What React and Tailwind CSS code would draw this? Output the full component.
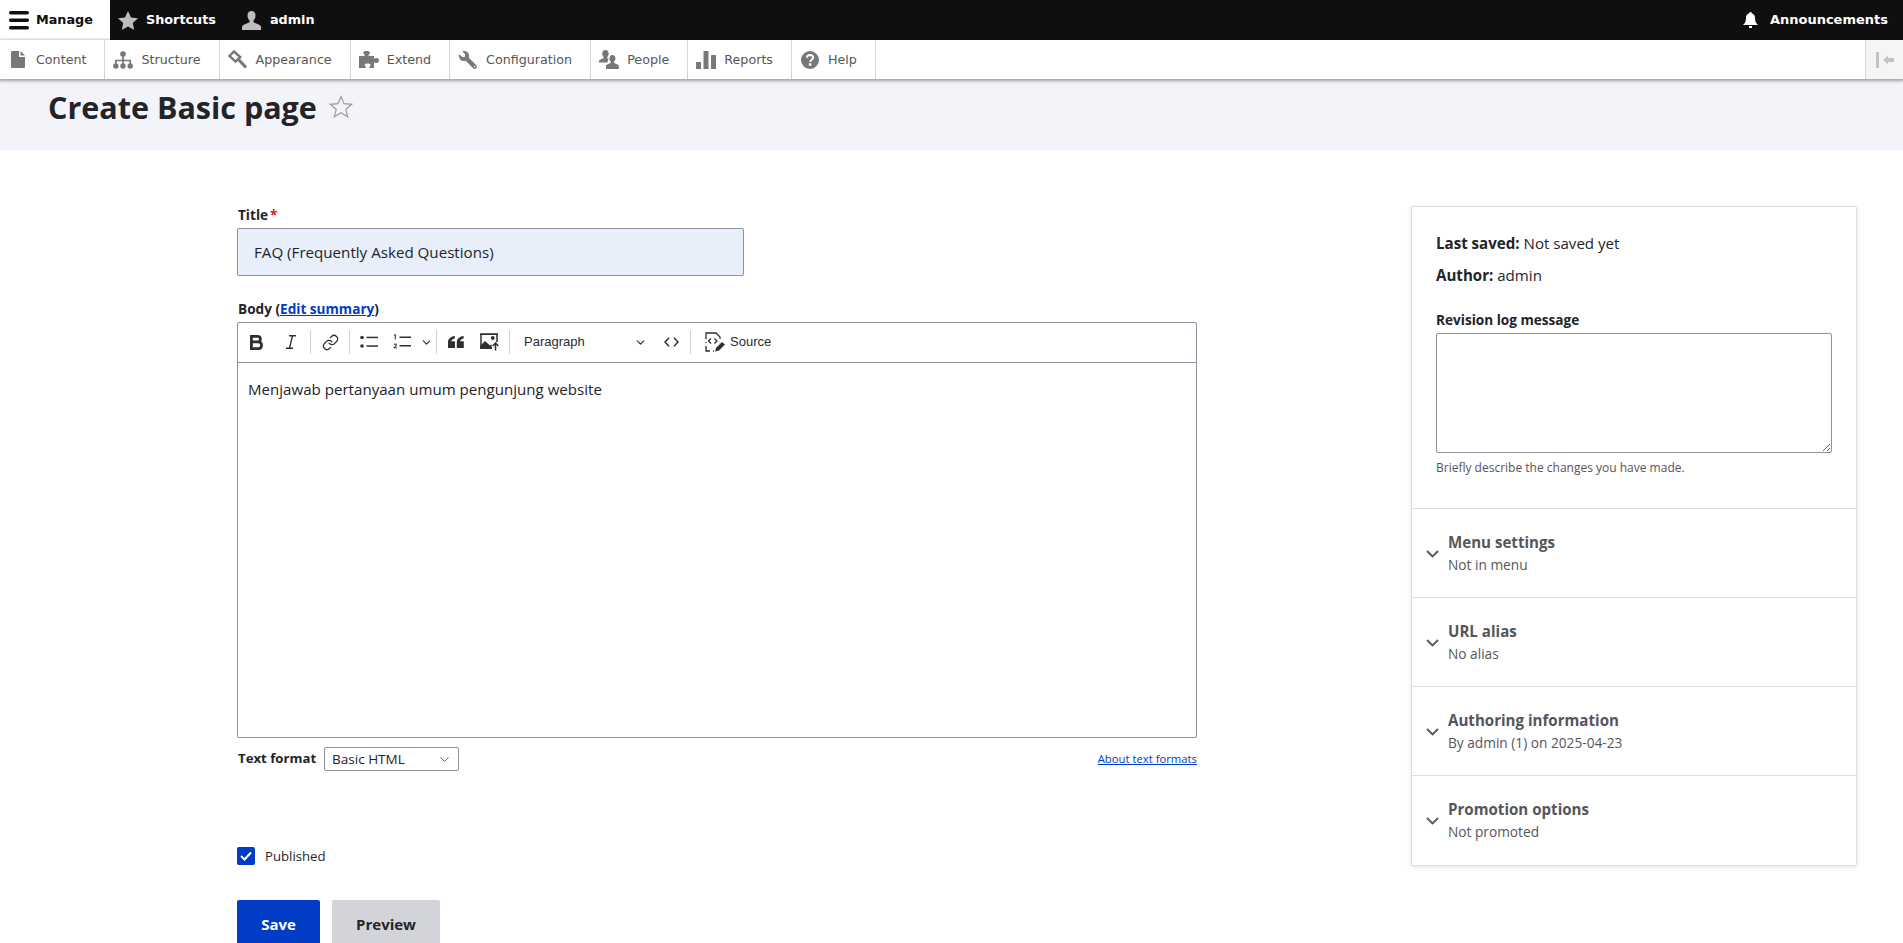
import React from "react";
import { FaWrench } from "react-icons/fa";
import { Link, ChevronDown } from "lucide-react";

const G = "#787878";

const Doc = () => (
  <svg width="14" height="17" viewBox="0 0 14 17" fill={G}>
    <path d="M1 0h7v6h6v10a1 1 0 0 1-1 1H1a1 1 0 0 1-1-1V1a1 1 0 0 1 1-1z" />
    <path d="M9.5 0 14 4.6H9.5z" />
  </svg>
);
const Org = () => (
  <svg width="20" height="18" viewBox="0 0 20 18" fill={G}>
    <circle cx="10" cy="3" r="2.8" />
    <circle cx="2.8" cy="15" r="2.7" />
    <circle cx="10" cy="15" r="2.7" />
    <circle cx="17.2" cy="15" r="2.7" />
    <path d="M10 3v12M2.8 15V9.5h14.4V15" fill="none" stroke={G} strokeWidth="1.7" />
  </svg>
);
const Hammer = () => (
  <svg width="20" height="20" viewBox="0 0 20 20">
    <path d="M6 1.5 12.2 7 7.6 11.6 1.4 6z" fill="#fff" stroke={G} strokeWidth="2.4" />
    <path d="M10.5 9.5 18 17.5" fill="none" stroke={G} strokeWidth="3.2" />
  </svg>
);
const Puzzle = () => (
  <svg width="20" height="18" viewBox="0 0 20 18" fill={G}>
    <path d="M0 5h5.5V3.6C4.6 3 4.2 2.4 4.2 1.8 4.2.6 5.6 0 7.6 0S11 .6 11 1.8c0 .6-.4 1.2-1.300 1.800V5H15v3c.7-.7 1.300-1 2-1 1.600 0 3 .7 3 2.400S18.600 12 17 12c-.7 0-1.300-.3-2-1v6h-4.500v-1.400c.8-.5 1.100-1 1.100-1.500 0-.9-1.300-1.500-3-1.500s-3 .6-3 1.500c0 .5.3 1 1.100 1.500V17H0z" />
  </svg>
);
const People = () => (
  <svg width="20" height="20" viewBox="0 0 20 20" fill={G}>
    <path d="M6.500 0c2 0 3.200 1.500 3.200 3.600 0 1.500-.6 2.800-1.400 3.500v1.200l1.500.7c-1 .7-1.300 2-1 3.500H0v-1.400c0-1 1-1.400 2.600-2.100L4.600 8.300V7.100C3.800 6.400 3.200 5.100 3.200 3.600 3.200 1.500 4.500 0 6.500 0z" />
    <path d="M13.500 5c1.800 0 2.900 1.400 2.900 3.300 0 1.400-.5 2.600-1.300 3.200v1.400l2.500 1.200c1.200.6 2.200 1 2.200 2V19H7v-2.900c0-1 1-1.400 2.200-2l2.500-1.200v-1.400c-.8-.6-1.300-1.800-1.300-3.200C10.400 6.400 11.700 5 13.500 5z" />
  </svg>
);
const Bars = () => (
  <svg width="20" height="18" viewBox="0 0 20 18" fill={G}>
    <rect x="0" y="11" width="5" height="7" rx=".5" />
    <rect x="7.500" y="0" width="5" height="18" rx=".5" />
    <rect x="15" y="4" width="5" height="14" rx=".5" />
  </svg>
);
const Help = () => (
  <svg width="18" height="18" viewBox="0 0 18 18">
    <circle cx="9" cy="9" r="9" fill={G} />
    <path d="M5.900 6.800C6 5 7.300 4 9 4c1.800 0 3.100 1 3.100 2.600 0 2.200-3 2.200-3 4.400" fill="none" stroke="#fff" strokeWidth="2" />
    <rect x="7.900" y="12.300" width="2.400" height="2.400" fill="#fff" />
  </svg>
);

const tray = [
  ["Content", <Doc />],
  ["Structure", <Org />],
  ["Appearance", <Hammer />],
  ["Extend", <Puzzle />],
  ["Configuration", <FaWrench size={18} color={G} className="-scale-x-100" />],
  ["People", <People />],
  ["Reports", <Bars />],
  ["Help", <Help />],
];

const Sep = () => <div className="w-px h-[24px] bg-[#ced0d6] mx-[2px]" />;

const Btn = ({ children, w = "w-[34px]" }) => (
  <div className={`${w} h-[34px] flex items-center justify-center shrink-0`}>{children}</div>
);

const BoldIcon = () => (
  <svg width="14" height="15" viewBox="0 0 14 15" fill="none" stroke="#2f2f33" strokeWidth="2.800">
    <path d="M1.400 1.400h6c4 0 4 5.500 0 5.500h-6zM1.400 6.900h7c4.200 0 4.200 6.700 0 6.700h-7z" />
  </svg>
);
const ItalicIcon = () => (
  <svg width="12" height="14" viewBox="0 0 12 14" fill="none" stroke="#2f2f33" strokeWidth="1.400">
    <path d="M4 .7h7M1 13.300h7M7.600 .7 4.400 13.300" />
  </svg>
);
const Ul = () => (
  <svg width="18" height="14" viewBox="0 0 18 14" fill="#2f2f33">
    <circle cx="2" cy="2.500" r="1.800" />
    <circle cx="2" cy="11" r="1.800" />
    <rect x="6.500" y="1.700" width="11.500" height="1.500" />
    <rect x="6.500" y="10.300" width="11.500" height="1.500" />
  </svg>
);
const Ol = () => (
  <svg width="18" height="16" viewBox="0 0 18 16" fill="#2f2f33">
    <path d="M1 .8 2.800 0v5.600H1.800V1.500L1 1.800z" />
    <path d="M.8 10.600c.2-.7.8-1 1.500-1 .9 0 1.500.5 1.500 1.300 0 1-1 1.600-1.800 2.400h1.900v.9H.6v-.8c1.100-1 2.100-1.800 2.100-2.400 0-.3-.2-.5-.5-.5-.3 0-.5.2-.6.6z" />
    <rect x="6.500" y="2.500" width="11.500" height="1.500" />
    <rect x="6.500" y="11" width="11.500" height="1.500" />
  </svg>
);
const Quote = () => (
  <svg width="16" height="12" viewBox="0 0 16 12" fill="#2f2f33">
    <path d="M0 12V6.500C0 3 2.200.7 6.800 0v2.400C4.600 3 3.400 4 3.200 5.300h3.800V12z" />
    <path d="M8.800 12V6.500c0-3.500 2.200-5.800 6.800-6.500v2.400c-2.200.6-3.400 1.600-3.600 2.900h3.800V12z" />
  </svg>
);
const ImgUp = () => (
  <svg width="20" height="18" viewBox="0 0 20 18">
    <path d="M1 15.500V1.200h16v8" fill="none" stroke="#2f2f33" strokeWidth="1.500" />
    <path d="M0 16V13l5-5 5 4.500 1.500-1.500V16z" fill="#2f2f33" />
    <path d="M0 .4h18v1.600H0zM0 14h12v2H0z" fill="#2f2f33" />
    <circle cx="12.800" cy="5" r="1.900" fill="#2f2f33" />
    <path d="M15.500 17.500v-7M12.700 13l2.800-3 2.800 3" fill="none" stroke="#2f2f33" strokeWidth="1.500" />
  </svg>
);
const Code = () => (
  <svg width="15" height="10" viewBox="0 0 15 10" fill="none" stroke="#2f2f33" strokeWidth="1.500">
    <path d="M5 .8 1 5l4 4.200M10 .8 14 5l-4 4.200" />
  </svg>
);
const SourceIcon = () => (
  <svg width="20" height="20" viewBox="0 0 20 20" fill="none" stroke="#2f2f33" strokeWidth="1.300">
    <path d="M1 7V1h10l4 4v2M1 11v-1M1 14v5h4M8 19h1" />
    <path d="M6 6.500 3.500 9 6 11.500M9.500 6.500 12 9l-2.500 2.500" />
    <path d="M10 19.500 11 16l6-6 3 2.500-6 6z" fill="#2f2f33" stroke="none" />
  </svg>
);

const Summary = ({ title, sub }) => (
  <div className="h-[89px] border-b border-[#dedfe4] last:border-b-0 flex items-center">
    <div className="w-[36px] flex justify-center pl-[4px] pt-[1px] shrink-0">
      <svg width="13" height="8" viewBox="0 0 13 8" fill="none" stroke="#55565b" strokeWidth="1.800">
        <path d="M1 1l5.500 5.500L12 1" />
      </svg>
    </div>
    <div className="pb-[2px]">
      <div className="text-[15.100px] leading-[22px] font-bold text-[#55565b]">{title}</div>
      <div className="text-[13.700px] leading-[18px] mt-[3px] text-[#55565b]">{sub}</div>
    </div>
  </div>
);

export default function App() {
  return (
    <div className="h-[943px] overflow-hidden bg-white text-[#232429] font-['Open_Sans','Noto_Sans',sans-serif]">
      <div className="h-[40px] bg-[#0f0f0f] flex items-center text-[12.800px] font-bold font-['DejaVu_Sans',sans-serif] text-white">
        <div className="h-full bg-white text-[#0f0f0f] flex items-center pr-[17px]">
          <div className="w-[36px] pl-[9px]">
            <svg width="20" height="19" viewBox="0 0 20 19" fill="#0f0f0f">
              <rect y="0" width="20" height="3.500" rx="1.700" />
              <rect y="7.500" width="20" height="3.500" rx="1.700" />
              <rect y="15" width="20" height="3.500" rx="1.700" />
            </svg>
          </div>
          <span>Manage</span>
        </div>
        <div className="flex items-center pr-[18px]">
          <div className="w-[36px] flex justify-center">
            <svg width="20" height="19" viewBox="0 0 20 19" fill="#bebebe">
              <path d="M10 0l3 6.500 7 .8-5.200 4.800 1.400 6.900L10 15.500 3.800 19l1.400-6.900L0 7.300l7-.8z" />
            </svg>
          </div>
          <span>Shortcuts</span>
        </div>
        <div className="flex items-center pr-[18px]">
          <div className="w-[36px] flex justify-center">
            <svg width="19" height="19" viewBox="0 0 19 19" fill="#bebebe">
              <path d="M9.500 0c2.600 0 4 1.800 4 4.500 0 2.200-.9 3.900-2 4.800v2l4 1.800c1.700.8 3.500 1.300 3.500 3V19H0v-2.900c0-1.700 1.800-2.200 3.500-3l4-1.800v-2c-1.100-.9-2-2.600-2-4.800C5.500 1.800 6.900 0 9.500 0z" />
            </svg>
          </div>
          <span>admin</span>
        </div>
        <div className="ml-auto flex items-center pr-[15px] gap-[12px] text-[13px]">
          <svg width="15" height="16" viewBox="0 0 15 16" fill="#fff">
            <path d="M7.500 0c.8 0 1.200.5 1.200 1.200C11 1.800 12 3.600 12 6c0 3 .8 5 3 7H0c2.200-2 3-4 3-7 0-2.400 1-4.200 3.300-4.800C6.300.5 6.700 0 7.500 0z" />
            <rect x="6" y="14" width="3" height="2" />
          </svg>
          <span>Announcements</span>
        </div>
      </div>

      <div className="relative z-10 h-[39px] bg-white flex items-stretch text-[12.700px] font-['DejaVu_Sans',sans-serif] text-[#565656] shadow-[0_1px_3px_1px_rgba(0,0,0,0.35)]">
        {tray.map(([label, icon]) => (
          <div key={label} className="flex items-center pr-[18px] border-r border-[#d5d5d5]">
            <div className="w-[36px] flex justify-center shrink-0">{icon}</div>
            <span>{label}</span>
          </div>
        ))}
        <div className="ml-auto w-[38px] bg-[#f5f5f5] border-l border-[#d5d5d5] flex items-center justify-center">
          <svg width="18" height="16" viewBox="0 0 18 16" fill="#c4c4c4">
            <rect x="0" y="0" width="3" height="16" />
            <path d="M7 8l5-4.500V6h6v4h-6v2.500z" />
          </svg>
        </div>
      </div>

      <div className="h-[71px] bg-[#f3f4f9] pl-[48px] pt-[7px] flex items-start gap-[12px]">
        <h1 className="text-[30.500px] leading-[42px] font-bold">Create Basic page</h1>
        <svg className="mt-[9px]" width="24" height="23" viewBox="0 0 24 23" fill="none" stroke="#9a9ba3" strokeWidth="1.200">
          <path d="M12 1.500l3 7.200 7.700.6-5.900 5 1.900 7.500L12 17.700l-6.700 4.100 1.900-7.500-5.900-5 7.700-.6z" />
        </svg>
      </div>

      <div className="flex justify-between pl-[237px] pr-[46px] pt-[56px]">
        <div className="w-[960px]">
          <div className="h-[18px] pl-[1px] text-[13.600px] leading-[18px] font-bold">
            Title<span className="text-[#d72222] ml-[2px]">*</span>
          </div>
          <div className="mt-[4px] w-[507px] h-[48px] rounded-[2px] border border-[#8e929c] bg-[#e8effb] pl-[16px] flex items-center text-[15.150px]">
            FAQ (Frequently Asked Questions)
          </div>

          <div className="mt-[24px] h-[18px] pl-[1px] text-[13.600px] leading-[18px] font-bold">
            Body (<span className="text-[#003cc5] underline">Edit summary</span>)
          </div>
          <div className="mt-[4px] h-[416px] rounded-[2px] border border-[#8e929c] flex flex-col">
            <div className="h-[40px] shrink-0 border-b border-[#8e929c] flex items-center pl-[2px] pb-[1px] font-['Liberation_Sans',sans-serif] text-[13px] text-[#2b2b30]">
              <Btn><BoldIcon /></Btn>
              <Btn><ItalicIcon /></Btn>
              <Sep />
              <Btn><Link size={17} strokeWidth={1.700} color="#2f2f33" /></Btn>
              <Sep />
              <Btn><Ul /></Btn>
              <Btn w="w-[32px]"><Ol /></Btn>
              <Btn w="w-[16px]"><ChevronDown size={13} strokeWidth={2} color="#2f2f33" /></Btn>
              <Sep />
              <Btn><Quote /></Btn>
              <Btn><ImgUp /></Btn>
              <Sep />
              <div className="w-[142px] h-[34px] flex items-center pl-[12px] justify-between pr-[7px] shrink-0">
                <span>Paragraph</span>
                <ChevronDown size={13} strokeWidth={2} color="#2f2f33" />
              </div>
              <Btn><Code /></Btn>
              <Sep />
              <div className="flex items-center pl-[12px] gap-[5px]">
                <SourceIcon />
                <span>Source</span>
              </div>
            </div>
            <div className="px-[10px] pt-[15px] text-[15.100px] leading-[22px]">
              Menjawab pertanyaan umum pengunjung website
            </div>
          </div>

          <div className="mt-[9px] h-[24px] pl-[1px] flex items-center">
            <span className="text-[13.200px] font-bold mr-[8px]">Text format</span>
            <div className="w-[135px] h-[24px] rounded-[2px] border border-[#8e929c] flex items-center pl-[7px] pr-[6px] justify-between text-[13.500px]">
              <span>Basic HTML</span>
              <ChevronDown size={15} strokeWidth={1.500} color="#55565b" />
            </div>
            <span className="ml-auto text-[11.300px] text-[#003cc5] underline">About text formats</span>
          </div>

          <div className="mt-[76px] h-[18px] flex items-center gap-[10px]">
            <div className="w-[18px] h-[18px] rounded-[2px] bg-[#003cc5] flex items-center justify-center">
              <svg width="12" height="10" viewBox="0 0 12 10" fill="none" stroke="#fff" strokeWidth="2">
                <path d="M1 5l3.500 3.500L11 1.500" />
              </svg>
            </div>
            <span className="text-[13.200px] pt-[2px]">Published</span>
          </div>

          <div className="mt-[35px] flex gap-[12px] text-[15px]">
            <div className="w-[83px] h-[48px] rounded-[2px] bg-[#003cc5] text-white font-bold flex items-center justify-center">Save</div>
            <div className="w-[108px] h-[48px] rounded-[2px] bg-[#d3d4d9] font-bold flex items-center justify-center">Preview</div>
          </div>
        </div>

        <div className="w-[446px] self-start bg-white border border-[#dedfe4] rounded-[2px] shadow-[0_1px_4px_rgba(0,0,0,0.12)]">
          <div className="h-[302px] border-b border-[#dedfe4] px-[24px] pt-[25px]">
            <div className="text-[15.100px] leading-[22px]"><b>Last saved:</b> Not saved yet</div>
            <div className="text-[15.100px] leading-[22px] mt-[10px]"><b>Author:</b> admin</div>
            <div className="mt-[25px] h-[18px] text-[13.600px] leading-[18px] font-bold">Revision log message</div>
            <textarea className="mt-[4px] block w-full h-[120px] rounded-[2px] border border-[#8e929c] bg-white" />
            <div className="mt-[6px] text-[12px] leading-[18px] text-[#55565b]">Briefly describe the changes you have made.</div>
          </div>
          <Summary title="Menu settings" sub="Not in menu" />
          <Summary title="URL alias" sub="No alias" />
          <Summary title="Authoring information" sub="By admin (1) on 2025-04-23" />
          <Summary title="Promotion options" sub="Not promoted" />
        </div>
      </div>
    </div>
  );
}
